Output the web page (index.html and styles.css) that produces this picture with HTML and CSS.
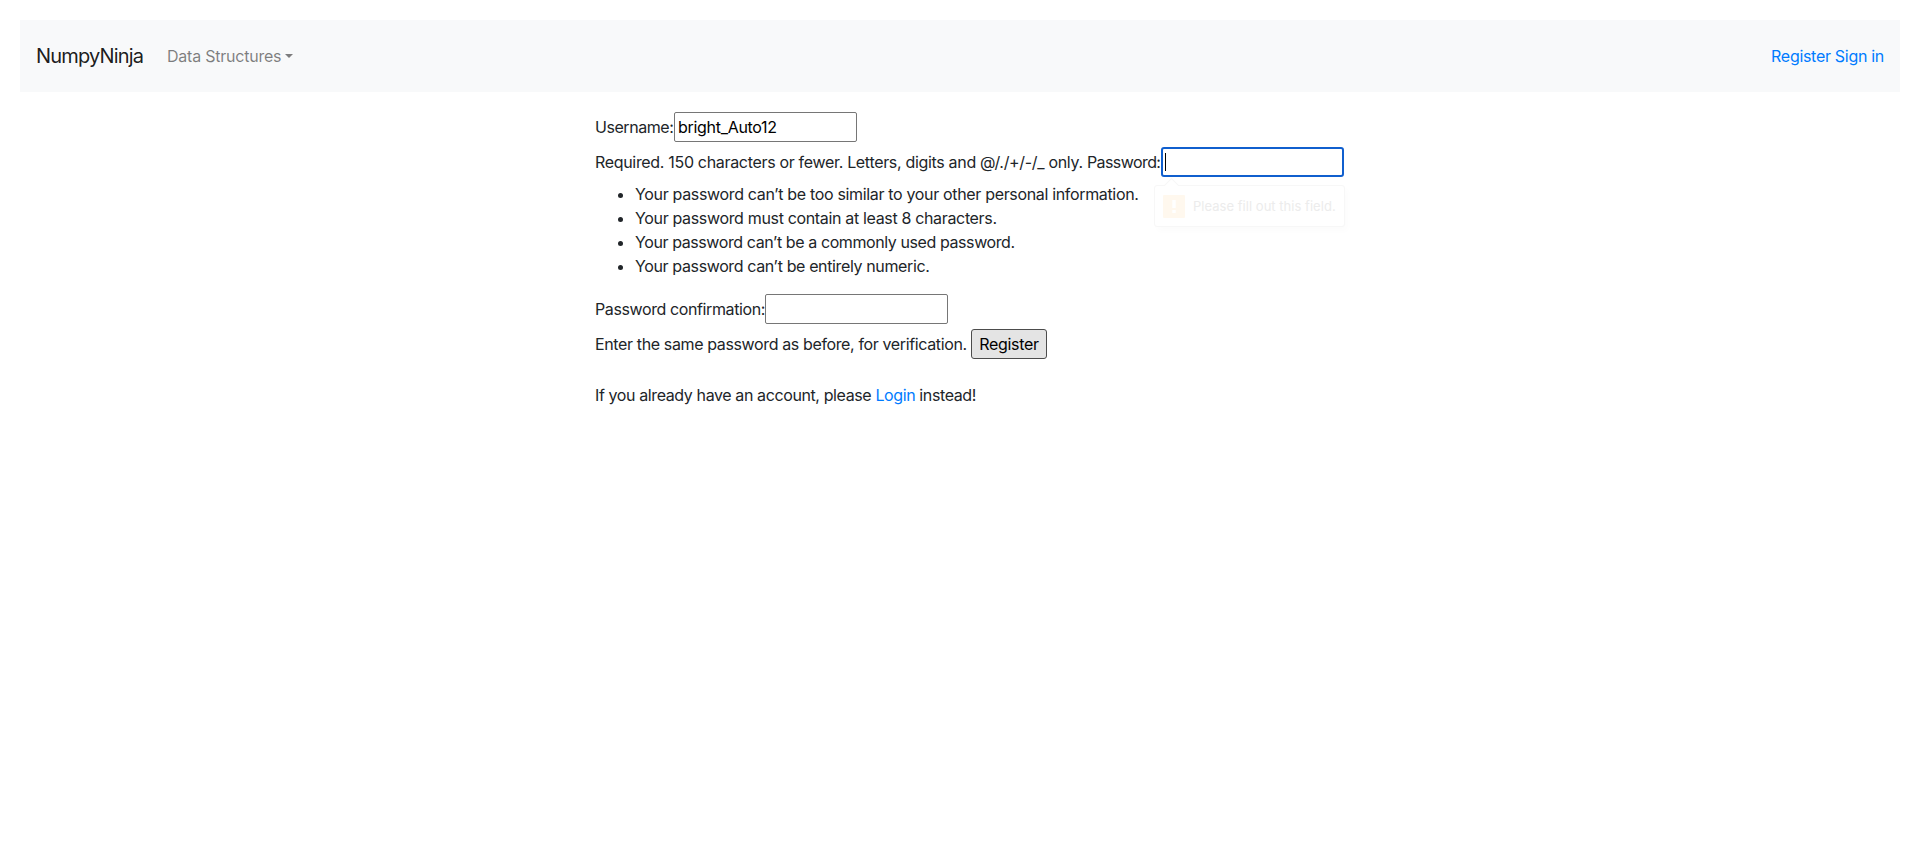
FILE: index.html
```html
<!DOCTYPE html>
<html lang="en">
<head>
<meta charset="utf-8">
<title>NumpyNinja</title>
<link rel="stylesheet" href="styles.css">
</head>
<body>
<nav class="navbar">
  <a class="brand">NumpyNinja</a>
  <a class="dropdown">Data Structures<span class="caret"></span></a>
  <div class="account"><a>Register</a> <a>Sign in</a></div>
</nav>
<main class="content">
  <form class="form">
    <div class="row"><label class="label-user">Username:</label><div class="field">bright_Auto12</div></div>
    <div class="row"><span class="help">Required. 150 characters or fewer. Letters, digits and @/./+/-/_ only. <span class="label-password">Password:</span></span>
      <div class="field focused"><span class="cursor"></span>
        <div class="tip"><span class="tip-arrow"></span>
          <svg class="tip-icon" viewBox="0 0 22 23"><rect width="22" height="23" rx="1" fill="#fff8ee"/><path d="M9.3 5h3.4v8H9.3zM9.3 15h3.4v3H9.3z" fill="#fff"/></svg>
          <span class="tip-text">Please fill out this field.</span>
        </div>
      </div>
    </div>
    <ul class="rules">
      <li><span class="rule-a">Your password can’t be too similar to your other personal information.</span></li>
      <li><span class="rule-b">Your password must contain at least 8 characters.</span></li>
      <li><span class="rule-c">Your password can’t be a commonly used password.</span></li>
      <li><span class="rule-d">Your password can’t be entirely numeric.</span></li>
    </ul>
    <div class="row"><label class="label-confirm">Password confirmation:</label><div class="field"></div></div>
    <div class="row"><span class="verify">Enter the same password as before, for verification.</span><button class="submit" type="button">Register</button></div>
  </form>
  <p class="login">If you already have an account, please <a>Login</a> instead!</p>
</main>
</body>
</html>
```
FILE: styles.css
```css
* { box-sizing: border-box; }
body { margin: 0; padding: 20px; background: #fff; color: #212529; font: 16px/24px Inter, "Liberation Sans", sans-serif; letter-spacing: -0.3px; white-space: nowrap; }
a { color: #007bff; text-decoration: none; }
.navbar { display: flex; align-items: center; height: 72px; padding: 0 16px; background: #f8f9fa; }
.brand { width: 131px; color: rgba(0,0,0,.9); font-size: 20px; line-height: 30px; letter-spacing: -0.83px; }
.dropdown { display: flex; align-items: center; color: rgba(0,0,0,.5); letter-spacing: -0.23px; }
.caret { margin-left: 4px; border: 4.8px solid transparent; border-top-color: currentColor; border-bottom: 0; }
.account { margin-left: auto; }
.content { width: 750px; margin: 20px 0 0 575px; }
.form { display: flex; flex-direction: column; gap: 5px; }
.row { display: flex; align-items: center; height: 30px; }
.label-user { width: 79px; letter-spacing: -0.45px; }
.help { width: 566px; letter-spacing: -0.32px; }
.label-password { letter-spacing: -0.58px; }
.label-confirm { width: 170px; letter-spacing: -0.39px; }
.verify { width: 376px; letter-spacing: -0.37px; }
.field { position: relative; width: 183px; height: 30px; padding: 2px 3px; border: 1px solid #767676; border-radius: 2px; background: #fff; color: #000; }
.focused { border: 2px solid #105fce; border-radius: 3px; }
.cursor { display: block; width: 1px; height: 18px; margin-top: 2px; margin-left: -1px; background: #000; }
.rules { height: 96px; margin: 0 0 11px; padding-left: 40px; }
.rule-a { letter-spacing: -0.335px; }
.rule-b { letter-spacing: -0.34px; }
.rule-c { letter-spacing: -0.41px; }
.rule-d { letter-spacing: -0.37px; }
.submit { width: 76px; height: 30px; padding: 0; border: 1px solid #4c4c4c; border-radius: 3px; background: #e4e4e4; color: #000; font: inherit; letter-spacing: inherit; }
.login { margin: 24px 0 0; letter-spacing: -0.39px; }
.tip { position: absolute; top: 36px; left: -9px; display: flex; align-items: center; width: 191px; height: 42px; padding-left: 8px; border: 1px solid #f7f7f7; border-radius: 3px; background: #fff; box-shadow: 3px 4px 6px rgba(0,0,0,.015); }
.tip-arrow { position: absolute; top: -6px; left: 11px; width: 11px; height: 11px; border: 1px solid #f7f7f7; border-right: 0; border-bottom: 0; background: #fff; transform: rotate(45deg); }
.tip-icon { width: 22px; height: 23px; margin-right: 8px; }
.tip-text { color: #ececec; font-size: 13px; letter-spacing: 0.03px; }
```
